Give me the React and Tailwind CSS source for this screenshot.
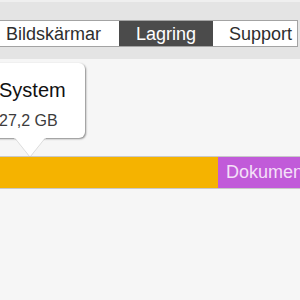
const App = () => {
  return (
    <div
      className="relative w-[300px] h-[300px] overflow-hidden bg-[#f6f6f6]"
      style={{ fontFamily: '"Liberation Sans", Arial, sans-serif' }}
    >
      <div className="h-[59px] bg-[#e4e4e4] border-t-2 border-[#efefef] pt-[18px]">
        <div className="flex h-[27px] ml-[-30px] w-[328px] border border-[#a3a3a3] text-[18px] leading-none">
          <div className="w-[148px] bg-white text-[#2e2e2e] flex items-center justify-end pr-[18px]">
            Bildskärmar
          </div>
          <div className="w-[94px] bg-[#4b4b4b] text-white flex items-center justify-center border-x border-[#4b4b4b]">
            Lagring
          </div>
          <div className="w-[84px] bg-white text-[#2e2e2e] flex items-center justify-end pr-[5px]">
            Support
          </div>
        </div>
      </div>

      <div className="mt-[97px] h-[33px] flex border-t border-b border-[#c9c9c9]">
        <div className="w-[218px] bg-[#f5b300]" />
        <div className="flex-1 bg-[#c15bd9] text-[#f4e1f8] text-[18px] flex items-center pl-[8px] whitespace-nowrap overflow-hidden">
          Dokument
        </div>
      </div>

      <div className="absolute left-[-14px] top-[63px]">
        <div className="w-[99px] h-[75px] bg-white rounded-[6px] shadow-[1px_1px_2px_rgba(0,0,0,0.45)] pl-[13px] pt-[17px]">
          <div className="text-[20px] leading-none text-[#111]">System</div>
          <div className="mt-[13px] text-[16px] leading-none text-[#3c3c3c]">27,2 GB</div>
        </div>
        <svg className="absolute left-[28px] top-[74px]" width="32" height="21" viewBox="0 0 32 21">
          <path d="M0 0 L16 20 L32 0 Z" fill="#ffffff" />
          <path d="M0 0 L16 20 L32 0" fill="none" stroke="rgba(0,0,0,0.12)" strokeWidth="1" />
          <rect x="0" y="0" width="32" height="1.5" fill="#ffffff" />
        </svg>
      </div>
    </div>
  );
};

export default App;
